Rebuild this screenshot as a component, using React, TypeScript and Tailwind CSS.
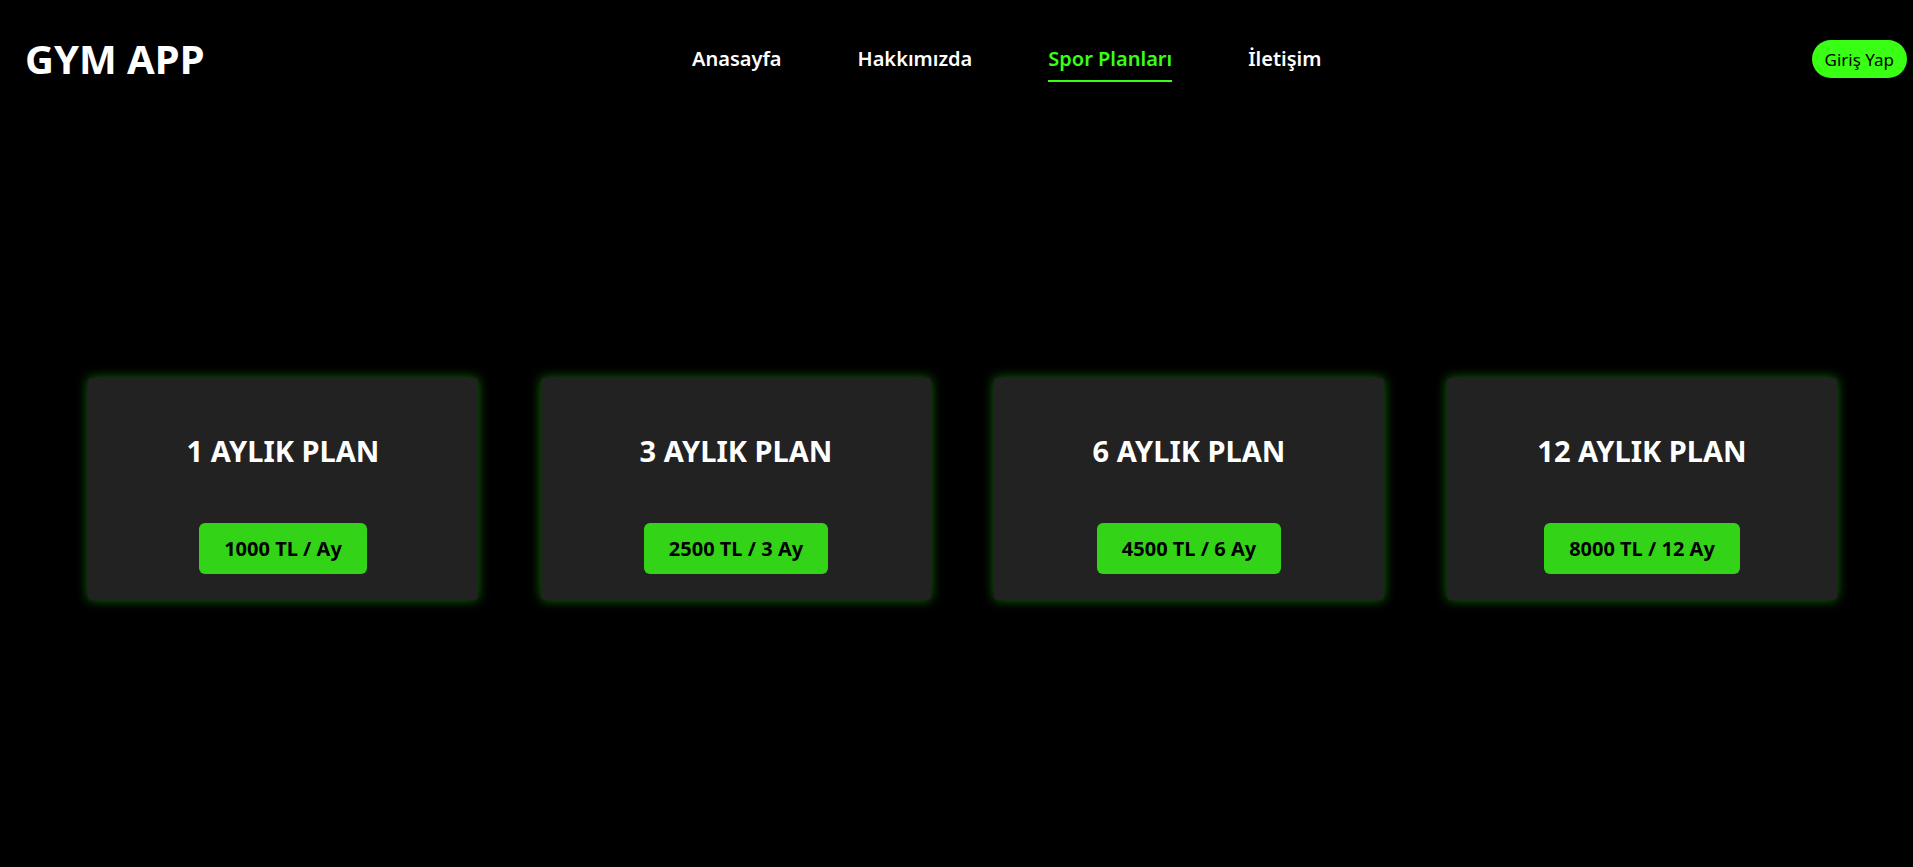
// Gym plans page: header nav + four membership cards

const navItems = ["Anasayfa", "Hakkımızda", "Spor Planları", "İletişim"];

const plans = [
  { title: "1 AYLIK PLAN", price: "1000 TL / Ay" },
  { title: "3 AYLIK PLAN", price: "2500 TL / 3 Ay" },
  { title: "6 AYLIK PLAN", price: "4500 TL / 6 Ay" },
  { title: "12 AYLIK PLAN", price: "8000 TL / 12 Ay" },
];

export default function App() {
  const active = "Spor Planları";

  return (
    <div
      className="min-h-screen w-full bg-black text-white"
      style={{ fontFamily: '"Noto Sans", "Open Sans", sans-serif' }}
    >
      {/* Header */}
      <header className="flex items-center h-[118px] pl-[25px] pr-[6px]">
        <h1 className="text-[40px] font-bold w-[667px] shrink-0">GYM APP</h1>
        <nav className="flex items-center gap-[76px]">
          {navItems.map((item) => (
            <a
              key={item}
              href="#"
              className={`relative text-[20px] font-semibold ${
                item === active ? "text-[#39ff14]" : "text-white"
              }`}
            >
              {item}
              {item === active && (
                <span className="absolute left-0 right-0 -bottom-[8px] h-[2px] bg-[#39ff14]" />
              )}
            </a>
          ))}
        </nav>
        <button className="ml-auto h-[38px] px-[13px] rounded-full bg-[#39ff14] text-black text-[17px] leading-none">
          Giriş Yap
        </button>
      </header>

      {/* Plans */}
      <main className="flex gap-[63px] pl-[88px] pt-[260px]">
        {plans.map((p) => (
          <div
            key={p.title}
            className="w-[390px] h-[222px] shrink-0 rounded-[4px] bg-[#222222] shadow-[0_0_12px_rgba(40,200,20,0.55)] flex flex-col items-center pt-[56px]"
          >
            <h2 className="text-[29px] font-bold leading-[34px]">{p.title}</h2>
            <button className="mt-[55px] h-[51px] px-[25px] rounded-[6px] bg-[#33d417] text-black text-[20px] font-bold">
              {p.price}
            </button>
          </div>
        ))}
      </main>
    </div>
  );
}
